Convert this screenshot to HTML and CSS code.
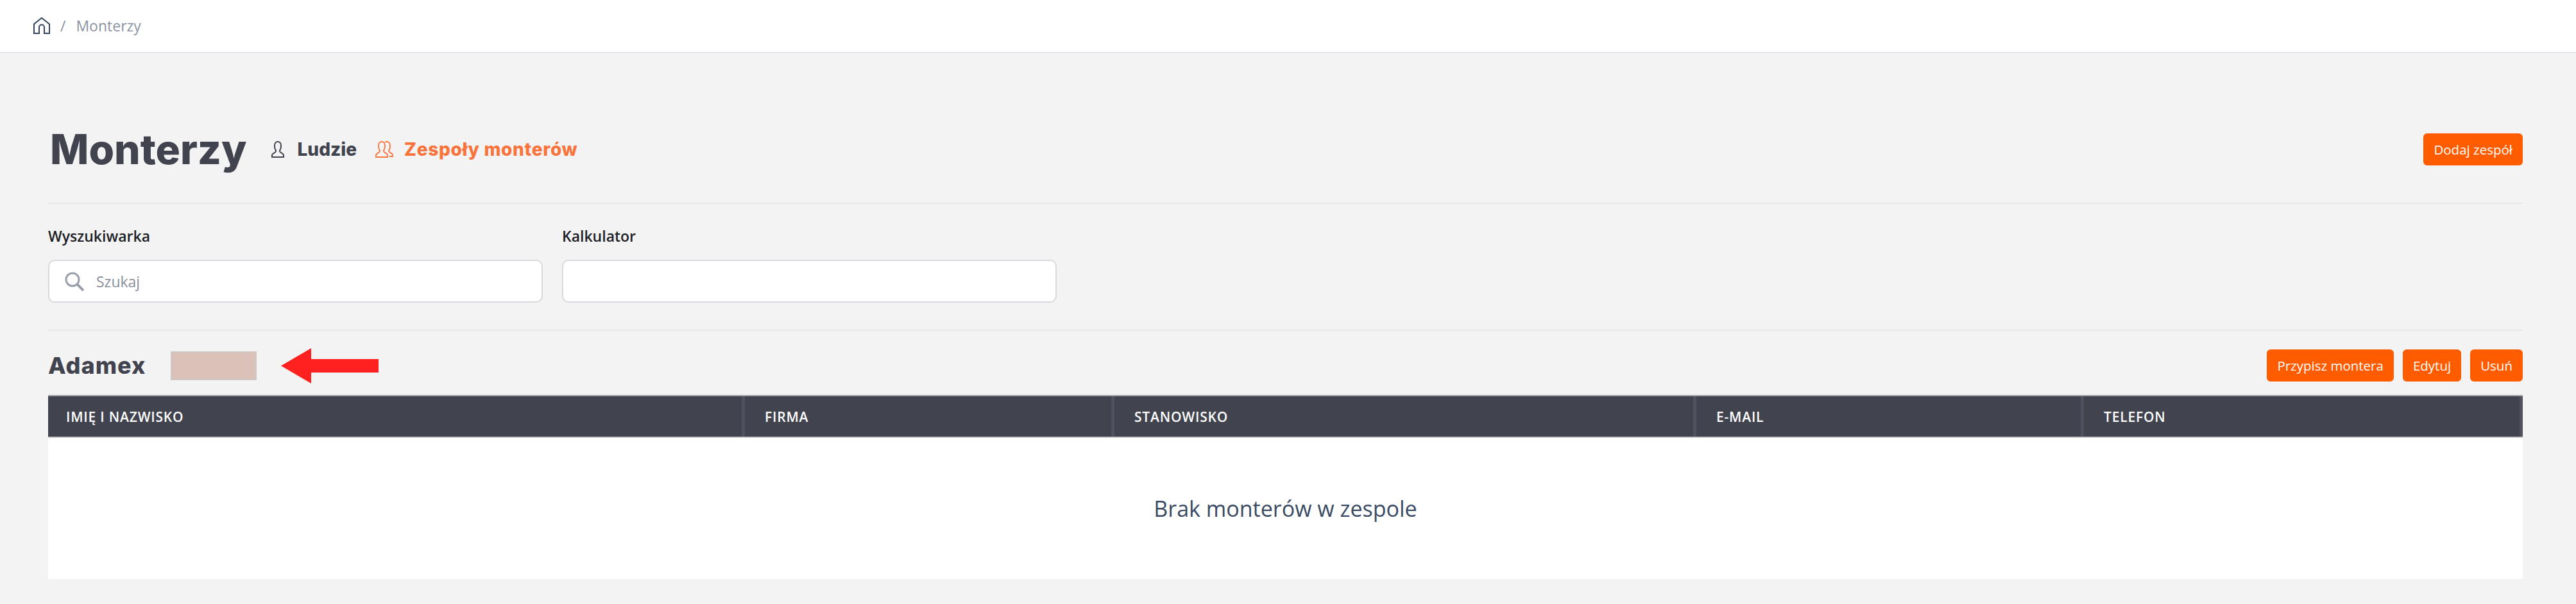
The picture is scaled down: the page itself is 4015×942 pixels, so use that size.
FILE: index.html
```html
<!DOCTYPE html>
<html lang="pl">
<head>
<meta charset="utf-8" />
<title>Monterzy</title>
<link rel="stylesheet" href="styles.css">
</head>
<body>
<nav class="crumbs">
  <svg class="crumbs-home" viewBox="0 0 26 26" fill="none" stroke="#34435c" stroke-width="2"><path d="M1 25V10.5L13 1l12 9.5V25h-8v-9.5a4 4 0 0 0-8 0V25z"/></svg>
  <span class="crumbs-sep">/</span>
  <span>Monterzy</span>
</nav>
<main class="page">
  <header class="page-head">
    <h1>Monterzy</h1>
    <a class="tab">
      <svg class="tab-icon" viewBox="0 0 20 26" fill="none" stroke="#41434f" stroke-width="2"><path d="M7 16v-1.500C5.500 13 5 10 5 7c0-3.500 2-6 5-6s5 2.500 5 6c0 3-.5 6-2 7.500V16c0 2 6 3 6 6v3H1v-3c0-3 6-4 6-6z"/></svg>
      Ludzie
    </a>
    <a class="tab tab-active">
      <svg class="tab-icon-wide" viewBox="0 0 28 26" fill="none" stroke="#f9743c" stroke-width="1.800"><path d="M7 16v-1.500C5.500 13 5 10 5 7c0-3.500 2-6 5-6s5 2.500 5 6c0 3-.5 6-2 7.500V16c0 2 6 3 6 6v3H1v-3c0-3 6-4 6-6z"/><path d="M15 1.500C16 1 17 1 18 1c3 0 5 2.500 5 6 0 3-.5 6-2 7.500V16c0 2 6 2.500 6 6v2h-5"/></svg>
      Zespoły monterów
    </a>
    <button class="btn btn-push">Dodaj zespół</button>
  </header>

  <section class="filters">
    <div class="field">
      <label>Wyszukiwarka</label>
      <div class="input">
        <svg class="input-icon" viewBox="0 0 30 30" fill="none" stroke="#9aa0ab" stroke-width="3"><circle cx="12" cy="12" r="10"/><path d="M19 19l10 10" stroke-width="4"/></svg>
        <span>Szukaj</span>
      </div>
    </div>
    <div class="field">
      <label>Kalkulator</label>
      <div class="input"></div>
    </div>
  </section>

  <section class="team">
    <div class="team-head">
      <h2>Adamex</h2>
      <span class="swatch"></span>
      <svg class="arrow" viewBox="0 0 152 55"><path d="M0 27.500L47 0v17h105v21H47v17z" fill="#ff2020"/></svg>
      <button class="btn btn-push">Przypisz montera</button>
      <button class="btn">Edytuj</button>
      <button class="btn">Usuń</button>
    </div>
    <div class="table-head">
      <div class="cell">Imię i nazwisko</div>
      <div class="cell">Firma</div>
      <div class="cell">Stanowisko</div>
      <div class="cell">E-mail</div>
      <div class="cell">Telefon</div>
    </div>
    <div class="table-empty">Brak monterów w zespole</div>
  </section>
</main>
</body>
</html>
```

FILE: styles.css
```css
* { box-sizing: border-box; }
body {
  margin: 0; background: #f3f3f3; color: #41434f;
  font-family: "Open Sans", sans-serif;
}
.crumbs {
  height: 83px; background: #fff; border-bottom: 2px solid #e2e3e8;
  display: flex; align-items: center; padding: 0 0 1px 52px;
  font-size: 23px; color: #8b93a3;
}
.crumbs-home { width: 26px; height: 26px; }
.crumbs-sep { margin: 0 16px 0 16px; }
.page { padding: 0 83px 0 75px; }
.page-head {
  display: flex; align-items: center; height: 235px; padding-top: 66px;
  border-bottom: 2px solid #e8e8ec;
}
h1 {
  margin: 0 38px 0 3px; font-family: Inter, sans-serif; font-size: 64px; font-weight: 800;
}
.tab {
  display: flex; align-items: center; margin-right: 29px;
  font-family: Inter, sans-serif; font-size: 28px; font-weight: 800;
}
.tab-active { color: #f9743c; letter-spacing: .7px; }
.tab-icon { width: 20px; height: 26px; margin-right: 21px; }
.tab-icon-wide { width: 28px; height: 26px; margin-right: 17px; }
.btn {
  height: 50px; padding: 0 16px; border: 0; border-radius: 6px;
  background: #ff5c00; color: #fff; font-family: "Open Sans", sans-serif; font-size: 20.500px;
}
.btn-push { margin-left: auto; }
.filters {
  display: flex; gap: 30px; height: 198px; padding-top: 35px;
  border-bottom: 2px solid #e8e8ec;
}
.field { width: 771px; }
.field label { display: block; font-size: 23px; font-weight: 600; color: #1d1f27; line-height: 30px; margin-bottom: 22px; }
.input {
  display: flex; align-items: center; height: 67px; padding-left: 24px;
  background: #fff; border: 2px solid #d8d9df; border-radius: 10px;
  font-size: 23px; color: #8b8f99;
}
.input-icon { width: 30px; height: 30px; margin-right: 19px; }
.team-head { display: flex; align-items: center; gap: 14px; height: 100px; padding-top: 8px; }
h2 { margin: 0 25px 0 0; font-family: Inter, sans-serif; font-size: 36px; font-weight: 800; letter-spacing: 1px; }
.swatch { width: 134px; height: 45px; background: #dcc1b9; border: 2px solid #cfc8c5; }
.arrow { width: 152px; height: 55px; margin-left: 24px; }
.table-head {
  display: grid; grid-template-columns: 1086px 576px 907px 604px 1fr;
  height: 67px; background: #41434f;
  border-top: 2px solid #a0a1a8; border-bottom: 2px solid #c7c8cc;
}
.cell {
  display: flex; align-items: center; padding-left: 31px;
  border-right: 5px solid #50535f;
  color: #fff; font-size: 21px; font-weight: 600; letter-spacing: .8px; text-transform: uppercase;
}
.cell:first-child { padding-left: 28px; }
.table-empty {
  display: flex; align-items: center; justify-content: center; height: 220px;
  background: #fff; color: #3a4a63; font-size: 34px; font-weight: 500;
}
```
